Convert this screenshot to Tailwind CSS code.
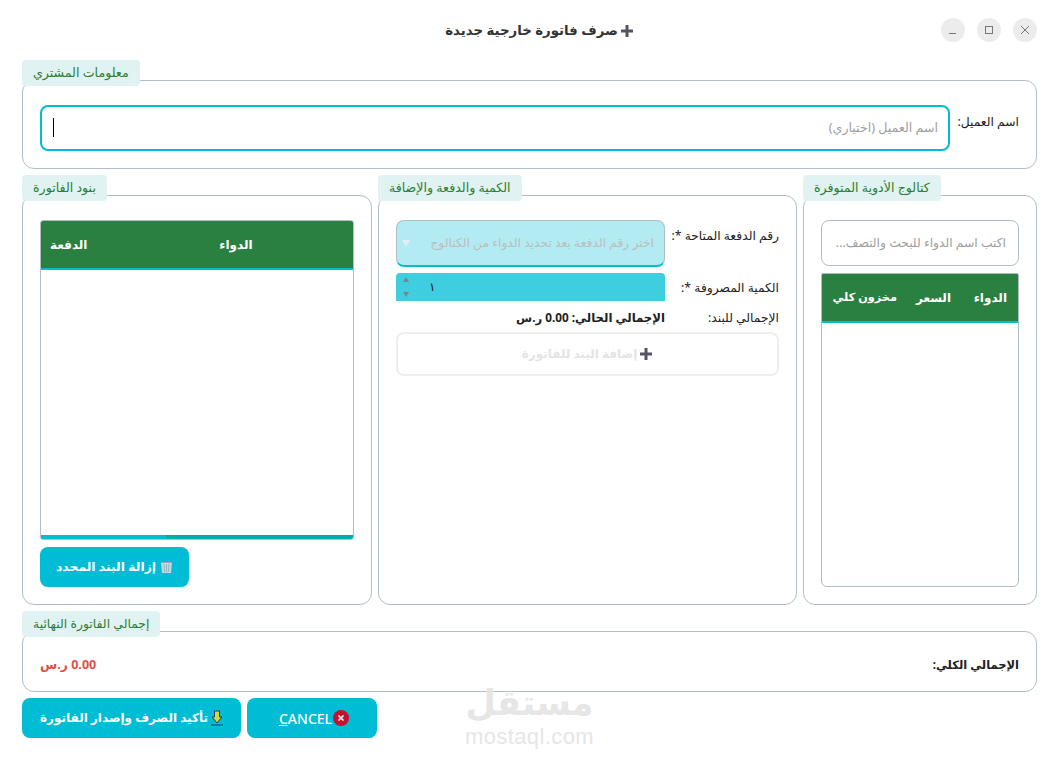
<!DOCTYPE html>
<html lang="ar" dir="rtl">
  <head>
    <meta charset="UTF-8" />
    <title>صرف فاتورة خارجية جديدة</title>
    <script src="https://cdn.jsdelivr.net/npm/@tailwindcss/browser@4"></script>
  </head>
  <body class="bg-white font-['Noto_Sans','Open_Sans','DejaVu_Sans',sans-serif] text-[12.3px] text-[#212121]">
    <div class="relative w-[1059px] h-[760px] overflow-hidden px-[22px] flex flex-col">
      <!-- title bar -->
      <header class="relative h-[60px] shrink-0 flex items-center justify-center">
        <h1 class="flex items-center gap-[2px] text-[13.3px] font-bold text-[#333] whitespace-nowrap ml-[20px] mt-[1px]">
          <svg class="w-[14px] h-[14px]" viewBox="0 0 14 14"><path d="M5.500 1h3v4.500H13v3H8.500V13h-3V8.500H1v-3h4.500z" fill="#55555f"/></svg>
          <span>صرف فاتورة خارجية جديدة</span>
        </h1>
        <div class="absolute right-[0px] top-[18px] flex gap-[12px]">
          <button class="w-[24px] h-[24px] rounded-full bg-[#ececec] flex items-center justify-center">
            <svg class="w-[10px] h-[10px]" viewBox="0 0 10 10"><path d="M1 1l8 8M9 1l-8 8" stroke="#777" fill="none"/></svg>
          </button>
          <button class="w-[24px] h-[24px] rounded-full bg-[#ececec] flex items-center justify-center">
            <svg class="w-[10px] h-[10px]" viewBox="0 0 10 10"><rect x="1.500" y="1.500" width="7" height="7" stroke="#777" fill="none"/></svg>
          </button>
          <button class="w-[24px] h-[24px] rounded-full bg-[#ececec] flex items-center justify-center">
            <svg class="w-[10px] h-[10px]" viewBox="0 0 10 10"><path d="M1 8.500h7" stroke="#777" fill="none"/></svg>
          </button>
        </div>
      </header>

      <!-- customer info -->
      <section class="relative mt-[20px] h-[89px] shrink-0 border border-[#b0bec5] rounded-[12px] flex items-start pt-[24px] px-[17px] gap-[6px]">
        <span class="absolute left-[-1px] top-[-21px] h-[26px] px-[11px] pt-[1px] flex items-center rounded-[4px] bg-[#e0f2f1] text-[12.6px] text-[#2e7d32]">معلومات المشتري</span>
        <label class="w-[63px] shrink-0 mt-[8px] whitespace-nowrap">اسم العميل:</label>
        <div class="relative flex-1 h-[46px] border-2 border-[#00bcd4] rounded-[8px] flex items-center pr-[10px] pt-[1px] text-[12.6px] text-[#9e9e9e]">
          اسم العميل (اختياري)
          <span class="absolute left-[11px] top-[11px] w-[1px] h-[19px] bg-black"></span>
        </div>
      </section>

      <!-- three columns -->
      <div class="mt-[26px] h-[410px] shrink-0 flex gap-[6px]">
        <!-- catalog -->
        <section class="relative w-[234px] shrink-0 border border-[#b0bec5] rounded-[12px] pt-[24px] px-[17px] pb-[17px] flex flex-col gap-[7px]">
          <span class="absolute left-[-1px] top-[-21px] h-[26px] px-[11px] pt-[1px] flex items-center rounded-[4px] bg-[#e0f2f1] text-[12.6px] text-[#2e7d32] whitespace-nowrap">كتالوج الأدوية المتوفرة</span>
          <div class="h-[46px] shrink-0 border border-[#b0bec5] rounded-[8px] flex items-center pr-[12px] text-[#9e9e9e] whitespace-nowrap">اكتب اسم الدواء للبحث والتصف...</div>
          <div class="flex-1 border border-[#b0bec5] rounded-b-[6px] rounded-t-[2px] overflow-hidden">
            <div class="h-[49px] bg-[#2a8040] border-b-2 border-[#00bcd4] flex items-center pr-[11px] text-white font-bold text-[12px] whitespace-nowrap">
              <span class="w-[56px]">الدواء</span>
              <span class="w-[54px]">السعر</span>
              <span class="text-[11.300px]">مخزون كلي</span>
            </div>
          </div>
        </section>

        <!-- quantity -->
        <section class="relative w-[419px] shrink-0 border border-[#b0bec5] rounded-[12px] pt-[24px] px-[17px] flex flex-col">
          <span class="absolute left-[-1px] top-[-21px] h-[26px] px-[11px] pt-[1px] flex items-center rounded-[4px] bg-[#e0f2f1] text-[12.6px] text-[#2e7d32] whitespace-nowrap">الكمية والدفعة والإضافة</span>
          <div class="flex h-[47px] gap-[7px]">
            <label class="w-[107px] shrink-0 mt-[7px] whitespace-nowrap">رقم الدفعة المتاحة *:</label>
            <div class="flex-1 bg-[#b2ebf2] border border-[#b0bec5] border-b-2 border-b-[#00bcd4] rounded-[8px] flex items-center justify-between pr-[10px] pl-[5px] text-[#bdbdbd] whitespace-nowrap">
              <span>اختر رقم الدفعة بعد تحديد الدواء من الكتالوج</span>
              <svg class="w-[8px] h-[7px]" viewBox="0 0 8 7"><path d="M0 0h8L4 7z" fill="#e0f0f2"/></svg>
            </div>
          </div>
          <div class="flex h-[28px] mt-[6px] gap-[7px]">
            <label class="w-[107px] shrink-0 mt-[6px] whitespace-nowrap">الكمية المصروفة *:</label>
            <div class="flex-1 bg-[#3fcde0] rounded-t-[4px] flex items-center">
              <span class="mr-auto ml-[13px] text-[12px]">١</span>
              <span class="w-[20px] h-full flex flex-col items-center justify-between py-[4px]">
                <svg class="w-[6px] h-[5px]" viewBox="0 0 6 5"><path d="M3 0l3 5H0z" fill="#6f8a90"/></svg>
                <svg class="w-[6px] h-[5px]" viewBox="0 0 6 5"><path d="M0 0h6L3 5z" fill="#6f8a90"/></svg>
              </span>
            </div>
          </div>
          <div class="flex h-[26px] mt-[3px] items-center gap-[7px] pt-[2px]">
            <label class="w-[107px] shrink-0 whitespace-nowrap">الإجمالي للبند:</label>
            <strong class="text-[11.7px] font-bold whitespace-nowrap">الإجمالي الحالي: 0.00 ر.س</strong>
          </div>
          <button class="mt-[2px] h-[44px] shrink-0 border-2 border-[#eeeeee] rounded-[8px] flex items-center justify-center gap-[2px] font-bold text-[12px] text-[#e4e4e4]">
            <svg class="w-[14px] h-[14px]" viewBox="0 0 14 14"><path d="M5.500 1h3v4.500H13v3H8.500V13h-3V8.500H1v-3h4.500z" fill="#55555f"/></svg>
            <span>إضافة البند للفاتورة</span>
          </button>
        </section>

        <!-- invoice lines -->
        <section class="relative flex-1 border border-[#b0bec5] rounded-[12px] pt-[24px] px-[17px] flex flex-col">
          <span class="absolute left-[-1px] top-[-21px] h-[26px] px-[11px] pt-[1px] flex items-center rounded-[4px] bg-[#e0f2f1] text-[12.6px] text-[#2e7d32]">بنود الفاتورة</span>
          <div class="h-[320px] shrink-0 border border-[#b0bec5] rounded-[3px] overflow-hidden flex flex-col">
            <div class="h-[49px] bg-[#2a8040] border-b-2 border-[#00bcd4] flex items-center text-white font-bold text-[12px]">
              <span class="w-[234px] text-center">الدواء</span>
              <span class="mr-auto ml-[9px]">الدفعة</span>
            </div>
            <div class="flex-1"></div>
            <div class="h-[4px] flex bg-[#00acac]">
              <div class="mr-auto w-[125px] bg-[#00bcd4]"></div>
            </div>
          </div>
          <button class="mt-[7px] mr-auto w-[149px] h-[40px] rounded-[8px] bg-[#00bcd4] text-white font-bold text-[12.4px] flex items-center justify-center gap-[4px] whitespace-nowrap">
            <svg class="w-[13px] h-[14px]" viewBox="0 0 13 14"><path d="M1 2h11l-1 11H2z" fill="#b9dde2"/><path d="M1 2.500h11" stroke="#8fa9ad"/><path d="M4 4l.5 8M6.500 4v8M9 4l-.5 8" stroke="#88a5aa" stroke-width=".7"/></svg>
            <span>إزالة البند المحدد</span>
          </button>
        </section>
      </div>

      <!-- grand total -->
      <section class="relative mt-[26px] h-[61px] shrink-0 border border-[#b0bec5] rounded-[12px] flex items-center justify-between px-[17px]">
        <span class="absolute left-[-1px] top-[-21px] h-[26px] px-[11px] pt-[1px] flex items-center rounded-[4px] bg-[#e0f2f1] text-[12.4px] text-[#2e7d32]">إجمالي الفاتورة النهائية</span>
        <span class="font-bold text-[11.500px] mt-[7px]">الإجمالي الكلي:</span>
        <span class="font-bold text-[12.500px] text-[#e04f45] mt-[8px]">0.00 ر.س</span>
      </section>

      <!-- actions -->
      <div class="mt-[6px] flex justify-end gap-[6px]">
        <button class="w-[130px] h-[40px] rounded-[8px] bg-[#00bcd4] text-white text-[14px] font-medium flex items-center justify-center gap-[1px] pl-[4px]" dir="ltr">
          <span><span class="underline">C</span>ANCEL</span>
          <svg class="w-[16px] h-[16px]" viewBox="0 0 16 16"><circle cx="8" cy="8" r="8" fill="#c8102e"/><path d="M5.500 5.500l5 5M10.500 5.500l-5 5" stroke="#fff" stroke-width="1.600"/></svg>
        </button>
        <button class="w-[219px] h-[40px] rounded-[8px] bg-[#00bcd4] text-white font-bold text-[12px] flex items-center justify-center gap-[3px] whitespace-nowrap">
          <svg class="w-[12px] h-[16px]" viewBox="0 0 12 16"><path d="M3.500 1h5v6H11l-5 6-5-6h2.500z" fill="#cddc39" stroke="#1f3a6e"/><path d="M0 15h12" stroke="#1f3a6e"/></svg>
          <span>تأكيد الصرف وإصدار الفاتورة</span>
        </button>
      </div>

      <!-- watermark -->
      <div class="absolute left-[465px] top-[680px] w-[129px] flex flex-col items-center text-[#e6e6e6] pointer-events-none">
        <span class="text-[35px] leading-[44px] font-bold whitespace-nowrap">مستقل</span>
        <span class="font-['Liberation_Sans',sans-serif] text-[22px] leading-[25px] tracking-[0.4px] whitespace-nowrap" dir="ltr">mostaql.com</span>
      </div>
    </div>
  </body>
</html>
